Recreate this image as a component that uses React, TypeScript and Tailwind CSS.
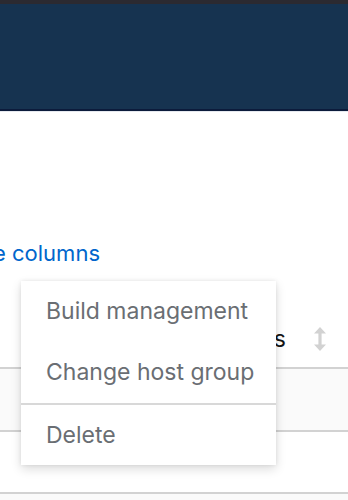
const MENU_TOP = ["Build management", "Change host group"];

function SortIcon() {
  return (
    <svg width="12" height="24" viewBox="0 0 12 24" className="text-[#d2d2d2]" fill="currentColor">
      <path d="M6 0 L12 6.5 H7.6 V17.5 H12 L6 24 L0 17.5 H4.4 V6.5 H0 Z" />
    </svg>
  );
}

export default function App() {
  return (
    <div className="relative h-[500px] w-[348px] overflow-hidden bg-white font-['Inter',sans-serif]">
      {/* Masthead */}
      <div className="h-[4px] bg-[#2b2a31]" />
      <div className="h-[105px] bg-[#163350]" />
      <div className="h-[2px] bg-[#0c1b3b]" />
      <div className="h-[1px] bg-[#e6e9ef]" />

      {/* Toolbar link */}
      <div className="mt-[127px] h-[28px] whitespace-nowrap text-[22px] leading-[28px] text-[#0066cc]">
        <span className="-ml-[7px]">e columns</span>
      </div>

      {/* Table */}
      <div className="mt-[44px]">
        <div className="flex h-[56px] items-center justify-end gap-[28px] pr-[22px] text-[23px] text-[#151515]">
          <span>Host groups</span>
          <SortIcon />
        </div>
        <div className="h-[2px] bg-[#d2d2d2]" />
        <div className="h-[61px] bg-[#fafafa]" />
        <div className="h-[2px] bg-[#d2d2d2]" />
        <div className="h-[60px] bg-white" />
        <div className="h-[2px] bg-[#d2d2d2]" />
        <div className="h-[60px] bg-[#fafafa]" />
      </div>

      {/* Kebab dropdown menu */}
      <div className="absolute left-[21px] top-[281px] w-[255px] bg-white shadow-[0_4px_10px_rgba(3,3,3,0.14),0_0_4px_rgba(3,3,3,0.08)]">
        {MENU_TOP.map((item) => (
          <div key={item} className="flex h-[61px] items-center pl-[25px] text-[23px] text-[#6a6e73]">
            {item}
          </div>
        ))}
        <div className="h-[2px] bg-[#d8d8d8]" />
        <div className="flex h-[60px] items-center pl-[25px] text-[23px] text-[#6a6e73]">Delete</div>
      </div>
    </div>
  );
}
